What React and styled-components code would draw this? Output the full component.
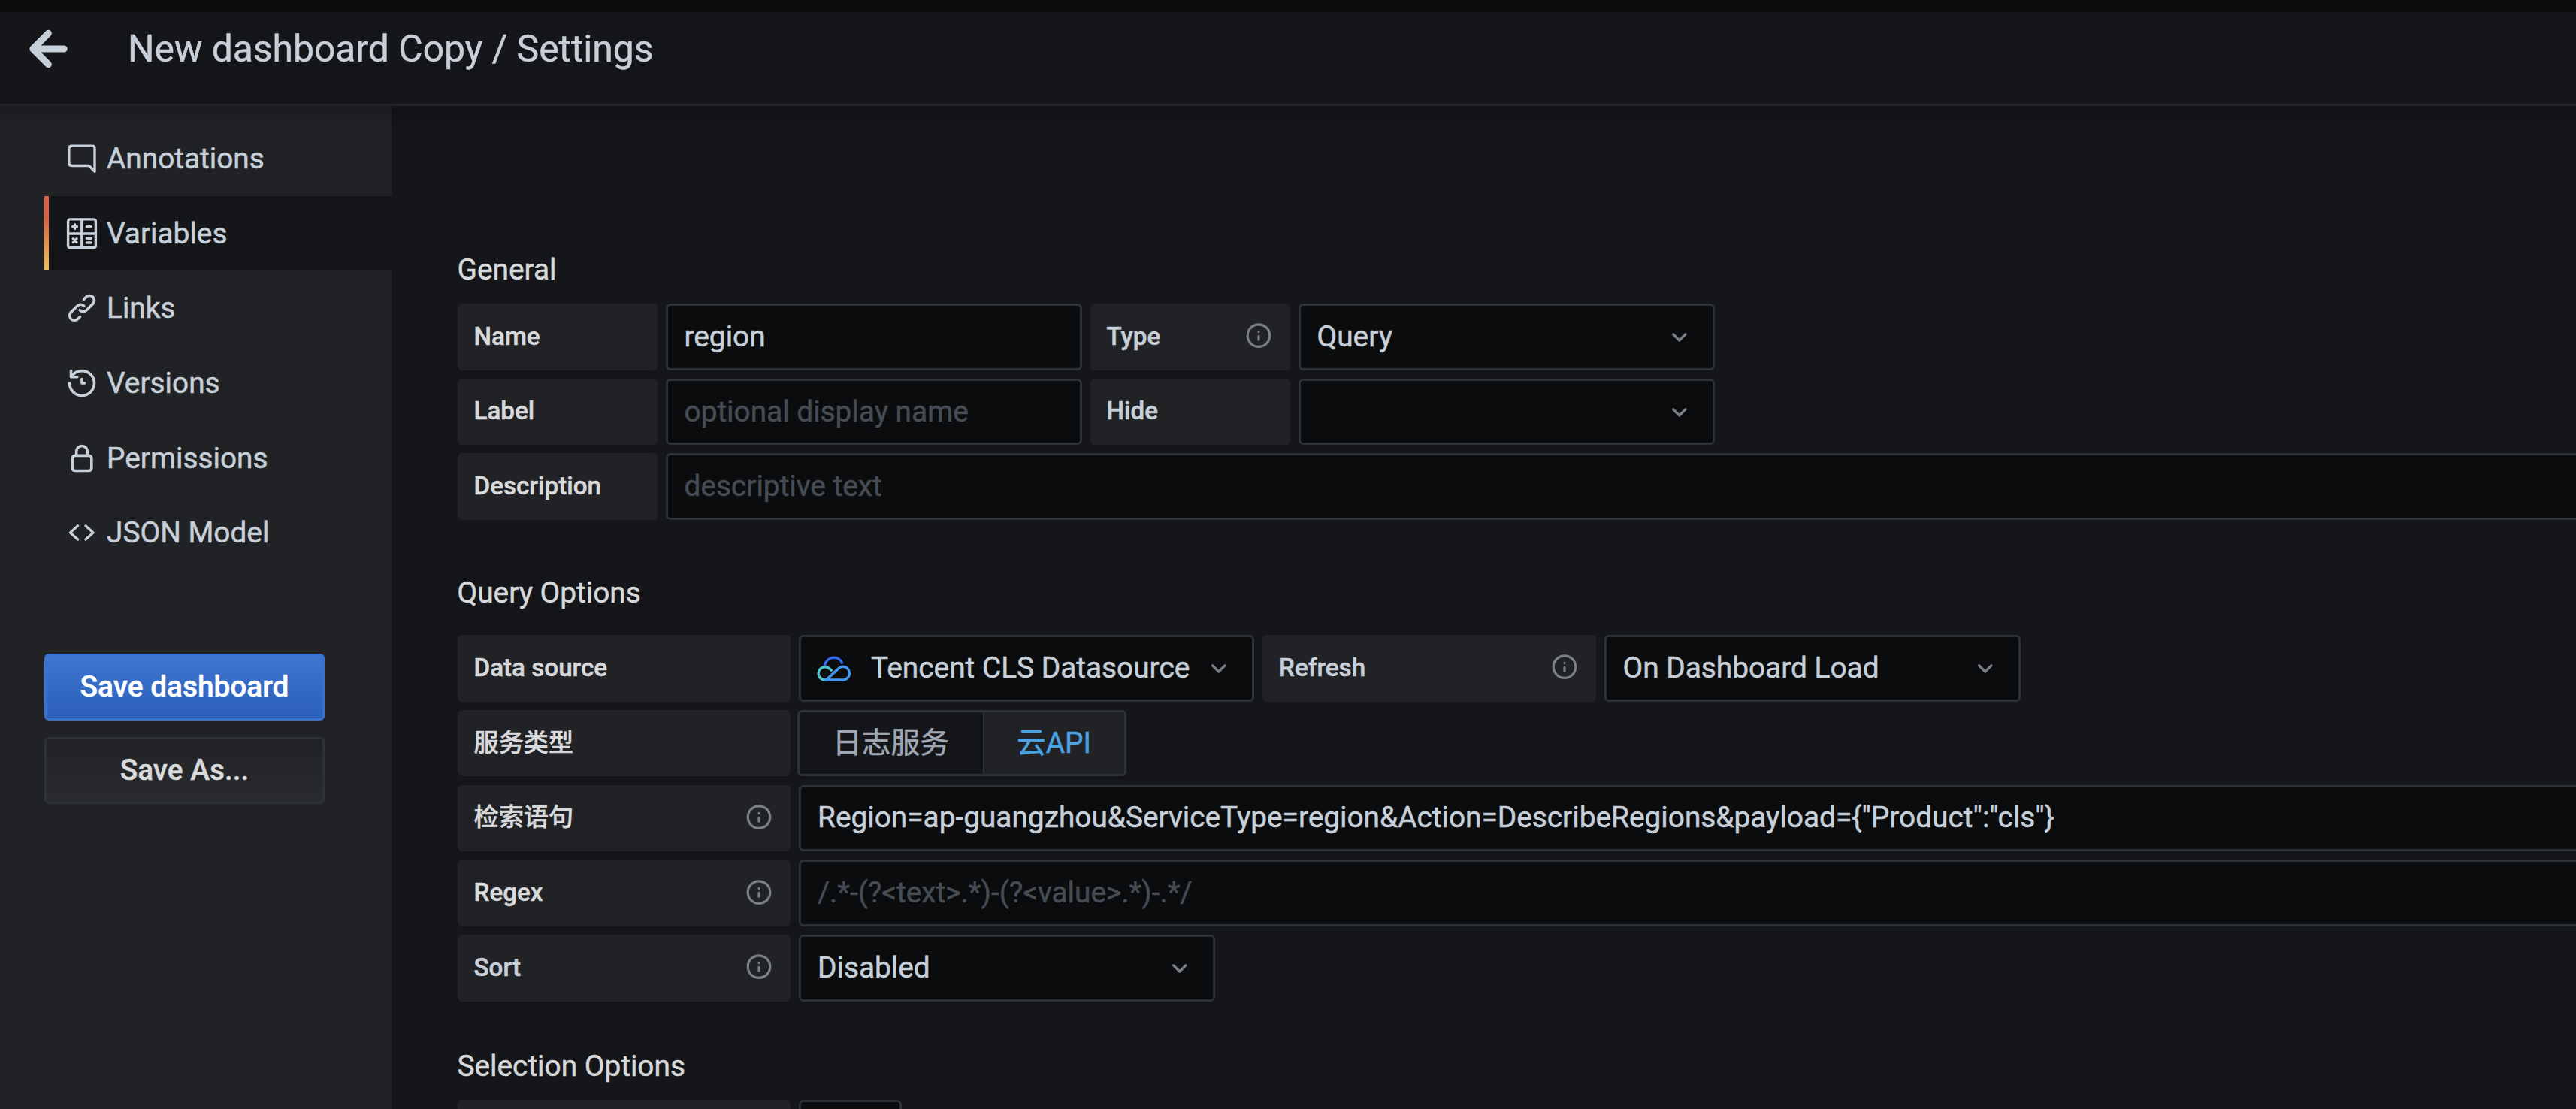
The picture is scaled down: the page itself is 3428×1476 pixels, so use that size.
import { useState } from 'react'
import styled, { createGlobalStyle } from 'styled-components'

const GlobalStyle = createGlobalStyle`
  :root {
    --color-canvas: #0d0d0d;
    --color-bg: #15161a;
    --color-bg-secondary: #212226;
    --color-input: #0b0c0e;
    --color-border: #2c3235;
    --color-label: #212226;
    --color-text: #c7d0d9;
    --color-text-strong: #d8d9da;
    --color-text-weak: #9fa7b3;
    --color-placeholder: #464c54;
    --color-icon: #7b8087;
    --color-active: #4ca1e0;
    --row: 88.6px;
    --gap: 11px;
    --radius: 6px;
  }

  * {
    box-sizing: border-box;
  }

  body {
    margin: 0;
    background: var(--color-bg);
    color: var(--color-text);
    font-family: Roboto, 'Noto Sans CJK SC', sans-serif;
    font-size: 38.8px;
    -webkit-text-stroke: 0.5px;
    overflow: hidden;
  }

  input, button {
    font-family: inherit;
    -webkit-text-stroke: inherit;
  }
`

const Page = styled.div`
  display: flex;
  flex-direction: column;
  height: 1476px;
  border-top: 16px solid var(--color-canvas);
`

const Header = styled.header`
  display: flex;
  align-items: center;
  gap: 74px;
  flex: none;
  height: 125px;
  padding: 0 0 25px 36px;
  border-bottom: 3px solid #202226;
`

const Title = styled.h1`
  margin: 0;
  font-size: 49.8px;
  font-weight: 400;
  line-height: 60px;
`

const Body = styled.div`
  display: flex;
  flex: 1;
  min-height: 0;
  background: linear-gradient(#111215, var(--color-bg) 32px);
`

const Sidebar = styled.aside`
  display: flex;
  flex-direction: column;
  flex: none;
  width: 520.5px;
  padding: 20px 0 0 59px;
  background: linear-gradient(#1a1b1e, var(--color-bg-secondary) 32px);
`

const NavItem = styled.a`
  display: flex;
  align-items: center;
  gap: 11px;
  height: 99.7px;
  padding-left: 28px;
  line-height: 44px;
  cursor: pointer;
  background: ${props => props.$active
    ? 'linear-gradient(#e0603c 30%, #f2c04f) left / 6px 100% no-repeat, var(--color-bg)'
    : 'transparent'};
`

const NavIcon = styled.svg`
  flex: none;
  width: 44px;
  height: 44px;
  fill: currentColor;
`

const LineIcon = styled(NavIcon)`
  fill: none;
  stroke: currentColor;
  stroke-width: 3.4;
  stroke-linecap: round;
  stroke-linejoin: round;
`

const Actions = styled.div`
  display: flex;
  flex-direction: column;
  gap: 22px;
  width: 373px;
  margin-top: 111px;
`

const Button = styled.button`
  height: 89px;
  padding: 0;
  border: 3px solid ${props => props.$primary ? '#3871cf' : 'var(--color-border)'};
  border-radius: var(--radius);
  background: ${props => props.$primary
    ? 'linear-gradient(#3f76d1, #2b5fb9)'
    : 'linear-gradient(#202226, #2a2b2f)'};
  color: ${props => props.$primary ? '#fff' : 'var(--color-text-strong)'};
  font-size: 38.8px;
  font-weight: 500;
  line-height: 1;
`

const Content = styled.main`
  display: flex;
  flex-direction: column;
  flex: 1;
  min-width: 0;
  padding: 195px 0 0 88px;
  overflow: hidden;
`

const Section = styled.section`
  display: flex;
  flex-direction: column;
  gap: 11.1px;
  flex: none;
  margin-bottom: ${props => props.$gapAfter}px;
`

const SectionTitle = styled.h2`
  margin: 0 0 ${props => props.$space}px;
  color: var(--color-text-strong);
  font-size: 38.8px;
  font-weight: 400;
  line-height: 46px;
`

const Row = styled.div`
  display: flex;
  gap: var(--gap);
  height: var(--row);
`

const Label = styled.label`
  display: flex;
  align-items: center;
  justify-content: space-between;
  flex: none;
  width: ${props => props.$wide ? 443.5 : 266}px;
  padding: 0 23px 2px 22px;
  border-radius: var(--radius);
  background: var(--color-label);
  color: ${props => props.$soft ? 'var(--color-text)' : 'var(--color-text-strong)'};
  font-size: 33.2px;
  font-weight: 500;
  line-height: 1;
`

const TextInput = styled.input`
  flex: ${props => props.$grow ? '1' : 'none'};
  width: 554px;
  min-width: 0;
  padding: 0 22px 2px;
  border: 3px solid var(--color-border);
  border-right-width: ${props => props.$grow ? '0' : '3px'};
  border-radius: ${props => props.$grow ? 'var(--radius) 0 0 var(--radius)' : 'var(--radius)'};
  background: var(--color-input);
  color: var(--color-text);
  font-size: 38.8px;
  outline: none;

  &::placeholder {
    color: var(--color-placeholder);
    opacity: 1;
  }
`

const SelectBox = styled.div`
  display: flex;
  align-items: center;
  flex: none;
  width: ${props => props.$width || 554}px;
  padding: 0 22px 0 ${props => props.$hasLogo ? 21 : 22}px;
  border: 3px solid var(--color-border);
  border-radius: var(--radius);
  background: var(--color-input);
`

const SelectValue = styled.span`
  flex: 1;
  padding-bottom: 2px;
  white-space: nowrap;
`

const Chevron = styled.svg`
  flex: none;
  width: 44px;
  height: 44px;
  fill: none;
  stroke: var(--color-icon);
  stroke-width: 3.4;
  stroke-linecap: round;
  stroke-linejoin: round;
`

const InfoMark = styled.svg`
  flex: none;
  width: 38px;
  height: 38px;
  fill: none;
  stroke: var(--color-icon);
  stroke-width: 3.2;
  stroke-linecap: round;
`

const CloudLogo = styled.svg`
  flex: none;
  width: 46px;
  height: 46px;
  margin-right: 26px;
  fill: none;
  stroke-width: 3.5;
`

const RadioGroup = styled.div`
  display: flex;
  flex: none;
  margin-left: -2.5px;
  border: 3px solid var(--color-border);
  border-radius: var(--radius);
  overflow: hidden;
`

const RadioOption = styled.button`
  width: ${props => props.$width}px;
  padding: 0;
  border: 0;
  border-left: ${props => props.$active ? '2px solid var(--color-border)' : '0'};
  background: ${props => props.$active ? 'var(--color-label)' : 'var(--color-bg)'};
  color: ${props => props.$active ? 'var(--color-active)' : 'var(--color-text-weak)'};
  font-size: 38.8px;
  line-height: 1;
`

const SmallField = styled.div`
  width: 137px;
  border: 3px solid var(--color-border);
  border-radius: var(--radius);
  background: var(--color-input);
`

const solidIcons = {
  link: 'M10,17.55,8.23,19.27a2.47,2.47,0,0,1-3.5-3.5l4.54-4.55a2.46,2.46,0,0,1,3.39-.09l.12.1a1,1,0,0,0,1.4-1.43A2.75,2.75,0,0,0,14,9.59a4.46,4.46,0,0,0-6.09.22L3.31,14.36a4.48,4.48,0,0,0,6.33,6.33L11.37,19A1,1,0,0,0,10,17.55ZM20.69,3.31a4.49,4.49,0,0,0-6.33,0L12.63,5A1,1,0,0,0,14,6.45l1.73-1.72a2.47,2.47,0,0,1,3.5,3.5l-4.54,4.55a2.46,2.46,0,0,1-3.39.09l-.12-.1a1,1,0,0,0-1.4,1.43,2.75,2.75,0,0,0,.23.21,4.47,4.47,0,0,0,6.09-.22l4.55-4.55A4.49,4.49,0,0,0,20.69,3.31Z',
  history: 'M12,2A10,10,0,0,0,5.12,4.77V3a1,1,0,0,0-2,0V7.5a1,1,0,0,0,1,1H8.62a1,1,0,0,0,0-2H6.22A8,8,0,1,1,4,12a1,1,0,0,0-2,0A10,10,0,1,0,12,2Zm0,6a1,1,0,0,0-1,1v3a1,1,0,0,0,1,1h2a1,1,0,0,0,0-2H13V9A1,1,0,0,0,12,8Z',
  lock: 'M17,9V7A5,5,0,0,0,7,7V9a3,3,0,0,0-3,3v7a3,3,0,0,0,3,3H17a3,3,0,0,0,3-3V12A3,3,0,0,0,17,9ZM9,7a3,3,0,0,1,6,0V9H9Zm9,12a1,1,0,0,1-1,1H7a1,1,0,0,1-1-1V12a1,1,0,0,1,1-1H17a1,1,0,0,1,1,1Z',
}

const lineIcons = {
  comment: 'M39 39.3 L31.5 31.5 H8.5 Q4.8 31.5 4.8 28 V8.8 Q4.8 5.2 8.5 5.2 H36 Q39 5.2 39 8.2 Z',
  calculator: 'M6.5 2.9 H37.5 Q40.4 2.9 40.4 5.8 V37.8 Q40.4 40.7 37.5 40.7 H6.5 Q3.6 40.7 3.6 37.8 V5.8 Q3.6 2.9 6.5 2.9 Z M21.8 3 V40.5 M3.6 22 H40.4 M9.6 12.6 H15.6 M12.6 9.6 V15.6 M28.4 12.6 H34.4 M10.2 28.8 L15 33.4 M15 28.8 L10.2 33.4 M28.4 28.2 H34.4 M28.4 34 H34.4',
  code: 'M16.5 12.8 L6.5 21.9 L16.5 31 M27 12.8 L37 21.9 L27 31',
}

const navItems = [
  { label: 'Annotations', icon: 'comment' },
  { label: 'Variables', icon: 'calculator' },
  { label: 'Links', icon: 'link' },
  { label: 'Versions', icon: 'history' },
  { label: 'Permissions', icon: 'lock' },
  { label: 'JSON Model', icon: 'code' },
]

function Icon({ name }) {
  if (lineIcons[name]) {
    return <LineIcon viewBox="0 0 44 44"><path d={lineIcons[name]} /></LineIcon>
  }
  return <NavIcon viewBox="0 0 24 24"><path d={solidIcons[name]} /></NavIcon>
}

function BackArrow() {
  return (
    <svg width="60" height="60" viewBox="0 0 60 60" fill="none" stroke="currentColor" strokeWidth="9" strokeLinecap="round" strokeLinejoin="round">
      <path d="M28.3 9.3 L7.8 30 L28.3 50.7 M9 30 H49.2" />
    </svg>
  )
}

function Info() {
  return (
    <InfoMark viewBox="0 0 38 38">
      <circle cx="19" cy="18.6" r="14.8" />
      <path d="M19 13.4 V13.6 M19 19.3 V24.2" />
    </InfoMark>
  )
}

function Select({ value, width, logo }) {
  return (
    <SelectBox $width={width} $hasLogo={Boolean(logo)}>
      {logo}
      <SelectValue>{value}</SelectValue>
      <Chevron viewBox="0 0 44 44">
        <path d="M13.7 18.9 L21.8 27 L29.9 18.9" />
      </Chevron>
    </SelectBox>
  )
}

function TencentLogo() {
  return (
    <CloudLogo viewBox="0 0 46 46">
      <path d="M10.3 19.8 C13.5 6.2 30.5 6.2 34 17.6" stroke="#2f6bee" />
      <path d="M20.4 27.2 C17 23.4 14.5 21.7 10.8 21.7 A8.7 8.7 0 0 0 10.8 39.1 H14" stroke="#4fc5cf" />
      <path d="M12.4 39.1 L28.6 24 C32 21 34 21 35.4 21.2 A9 9 0 0 1 35.4 39.1 Z" stroke="#4399f0" />
    </CloudLogo>
  )
}

function App() {
  const [activeItem, setActiveItem] = useState('Variables')
  const [service, setService] = useState('云API')

  return (
    <>
      <GlobalStyle />
      <Page>
        <Header>
          <BackArrow />
          <Title>New dashboard Copy / Settings</Title>
        </Header>
        <Body>
          <Sidebar>
            {navItems.map(item => (
              <NavItem
                key={item.label}
                $active={item.label === activeItem}
                onClick={() => setActiveItem(item.label)}
              >
                <Icon name={item.icon} />
                {item.label}
              </NavItem>
            ))}
            <Actions>
              <Button $primary>Save dashboard</Button>
              <Button>Save As...</Button>
            </Actions>
          </Sidebar>
          <Content>
            <Section $gapAfter={74}>
              <SectionTitle $space={11}>General</SectionTitle>
              <Row>
                <Label>Name</Label>
                <TextInput defaultValue="region" />
                <Label $soft>Type<Info /></Label>
                <Select value="Query" />
              </Row>
              <Row>
                <Label>Label</Label>
                <TextInput placeholder="optional display name" />
                <Label $soft>Hide</Label>
                <Select value="" />
              </Row>
              <Row>
                <Label>Description</Label>
                <TextInput $grow placeholder="descriptive text" />
              </Row>
            </Section>
            <Section $gapAfter={63}>
              <SectionTitle $space={22}>Query Options</SectionTitle>
              <Row>
                <Label $wide>Data source</Label>
                <Select value="Tencent CLS Datasource" width={606} logo={<TencentLogo />} />
                <Label $wide $soft>Refresh<Info /></Label>
                <Select value="On Dashboard Load" />
              </Row>
              <Row>
                <Label $wide>服务类型</Label>
                <RadioGroup>
                  <RadioOption
                    $width={244}
                    $active={service === '日志服务'}
                    onClick={() => setService('日志服务')}
                  >
                    日志服务
                  </RadioOption>
                  <RadioOption
                    $width={188}
                    $active={service === '云API'}
                    onClick={() => setService('云API')}
                  >
                    云API
                  </RadioOption>
                </RadioGroup>
              </Row>
              <Row>
                <Label $wide>检索语句<Info /></Label>
                <TextInput
                  $grow
                  defaultValue={'Region=ap-guangzhou&ServiceType=region&Action=DescribeRegions&payload={"Product":"cls"}'}
                />
              </Row>
              <Row>
                <Label $wide>Regex<Info /></Label>
                <TextInput $grow placeholder="/.*-(?<text>.*)-(?<value>.*)-.*/" />
              </Row>
              <Row>
                <Label $wide $soft>Sort<Info /></Label>
                <Select value="Disabled" />
              </Row>
            </Section>
            <Section $gapAfter={0}>
              <SectionTitle $space={11}>Selection Options</SectionTitle>
              <Row>
                <Label $wide />
                <SmallField />
              </Row>
            </Section>
          </Content>
        </Body>
      </Page>
    </>
  )
}

export default App
